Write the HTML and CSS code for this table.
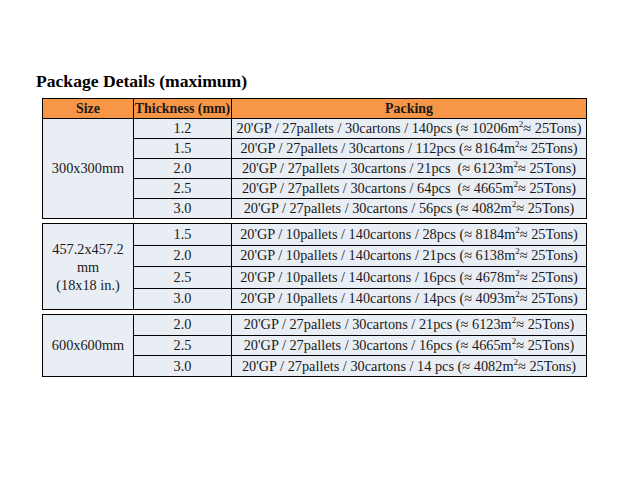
FILE: index.html
```html
<!DOCTYPE html>
<html>
<head>
<meta charset="utf-8">
<link rel="stylesheet" href="styles.css">
</head>
<body>
<div class="page">
  <h1 class="title">Package Details (maximum)</h1>
  <table class="grp first">
    <colgroup><col class="c1"><col class="c2"><col class="c3"></colgroup>
    <tr class="head"><th>Size</th><th>Thickness (mm)</th><th>Packing</th></tr>
    <tr class="r1"><td rowspan="5" class="size">300x300mm</td><td>1.2</td><td>20'GP / 27pallets / 30cartons / 140pcs (≈ 10206m<sup>2</sup>≈ 25Tons)</td></tr>
    <tr class="r1"><td>1.5</td><td>20'GP / 27pallets / 30cartons / 112pcs (≈ 8164m<sup>2</sup>≈ 25Tons)</td></tr>
    <tr class="r1"><td>2.0</td><td>20'GP / 27pallets / 30cartons / 21pcs &nbsp;(≈ 6123m<sup>2</sup>≈ 25Tons)</td></tr>
    <tr class="r1"><td>2.5</td><td>20'GP / 27pallets / 30cartons / 64pcs &nbsp;(≈ 4665m<sup>2</sup>≈ 25Tons)</td></tr>
    <tr class="r1"><td>3.0</td><td>20'GP / 27pallets / 30cartons / 56pcs (≈ 4082m<sup>2</sup>≈ 25Tons)</td></tr>
  </table>
  <table class="grp">
    <colgroup><col class="c1"><col class="c2"><col class="c3"></colgroup>
    <tr class="r2"><td rowspan="4" class="size multi">457.2x457.2<br>mm<br>(18x18 in.)</td><td>1.5</td><td>20'GP / 10pallets / 140cartons / 28pcs (≈ 8184m<sup>2</sup>≈ 25Tons)</td></tr>
    <tr class="r2"><td>2.0</td><td>20'GP / 10pallets / 140cartons / 21pcs (≈ 6138m<sup>2</sup>≈ 25Tons)</td></tr>
    <tr class="r2"><td>2.5</td><td>20'GP / 10pallets / 140cartons / 16pcs (≈ 4678m<sup>2</sup>≈ 25Tons)</td></tr>
    <tr class="r2"><td>3.0</td><td>20'GP / 10pallets / 140cartons / 14pcs (≈ 4093m<sup>2</sup>≈ 25Tons)</td></tr>
  </table>
  <table class="grp">
    <colgroup><col class="c1"><col class="c2"><col class="c3"></colgroup>
    <tr class="r3"><td rowspan="3" class="size">600x600mm</td><td>2.0</td><td>20'GP / 27pallets / 30cartons / 21pcs (≈ 6123m<sup>2</sup>≈ 25Tons)</td></tr>
    <tr class="r3"><td>2.5</td><td>20'GP / 27pallets / 30cartons / 16pcs (≈ 4665m<sup>2</sup>≈ 25Tons)</td></tr>
    <tr class="r3"><td>3.0</td><td>20'GP / 27pallets / 30cartons / 14 pcs (≈ 4082m<sup>2</sup>≈ 25Tons)</td></tr>
  </table>
</div>
</body>
</html>
```
FILE: styles.css
```css
html, body {
  margin: 0;
  padding: 0;
  background: #ffffff;
}
.page {
  width: 638px;
  height: 479px;
  padding-top: 72px;
  box-sizing: border-box;
  font-family: "Liberation Serif", "Times New Roman", serif;
  color: #1a1a1a;
}
.title {
  margin: 0 0 7px 36px;
  font-size: 17.6px;
  font-weight: bold;
  line-height: 19px;
  color: #000;
  letter-spacing: 0;
}
.grp {
  margin-left: 42px;
  width: 544px;
  border-collapse: collapse;
  table-layout: fixed;
  margin-top: 4px;
}
.grp.first {
  margin-top: 0;
}
.c1 { width: 91px; }
.c2 { width: 98px; }
.c3 { width: 355px; }
th, td {
  border: 1px solid #000;
  padding: 0;
  text-align: center;
  vertical-align: middle;
  font-size: 14.3px;
  line-height: 15px;
  white-space: nowrap;
}
th {
  background: #f79646;
  font-weight: bold;
  font-size: 13.9px;
  height: 19px;
  color: #1a1a1a;
}
td {
  background: #e9edf4;
}
.r1 td { height: 19px; }
.r2 td { height: 20.5px; }
.r3 td { height: 19.7px; }
td.multi {
  line-height: 18px;
}
sup {
  font-size: 9px;
  line-height: 0;
  vertical-align: 6px;
}
```
